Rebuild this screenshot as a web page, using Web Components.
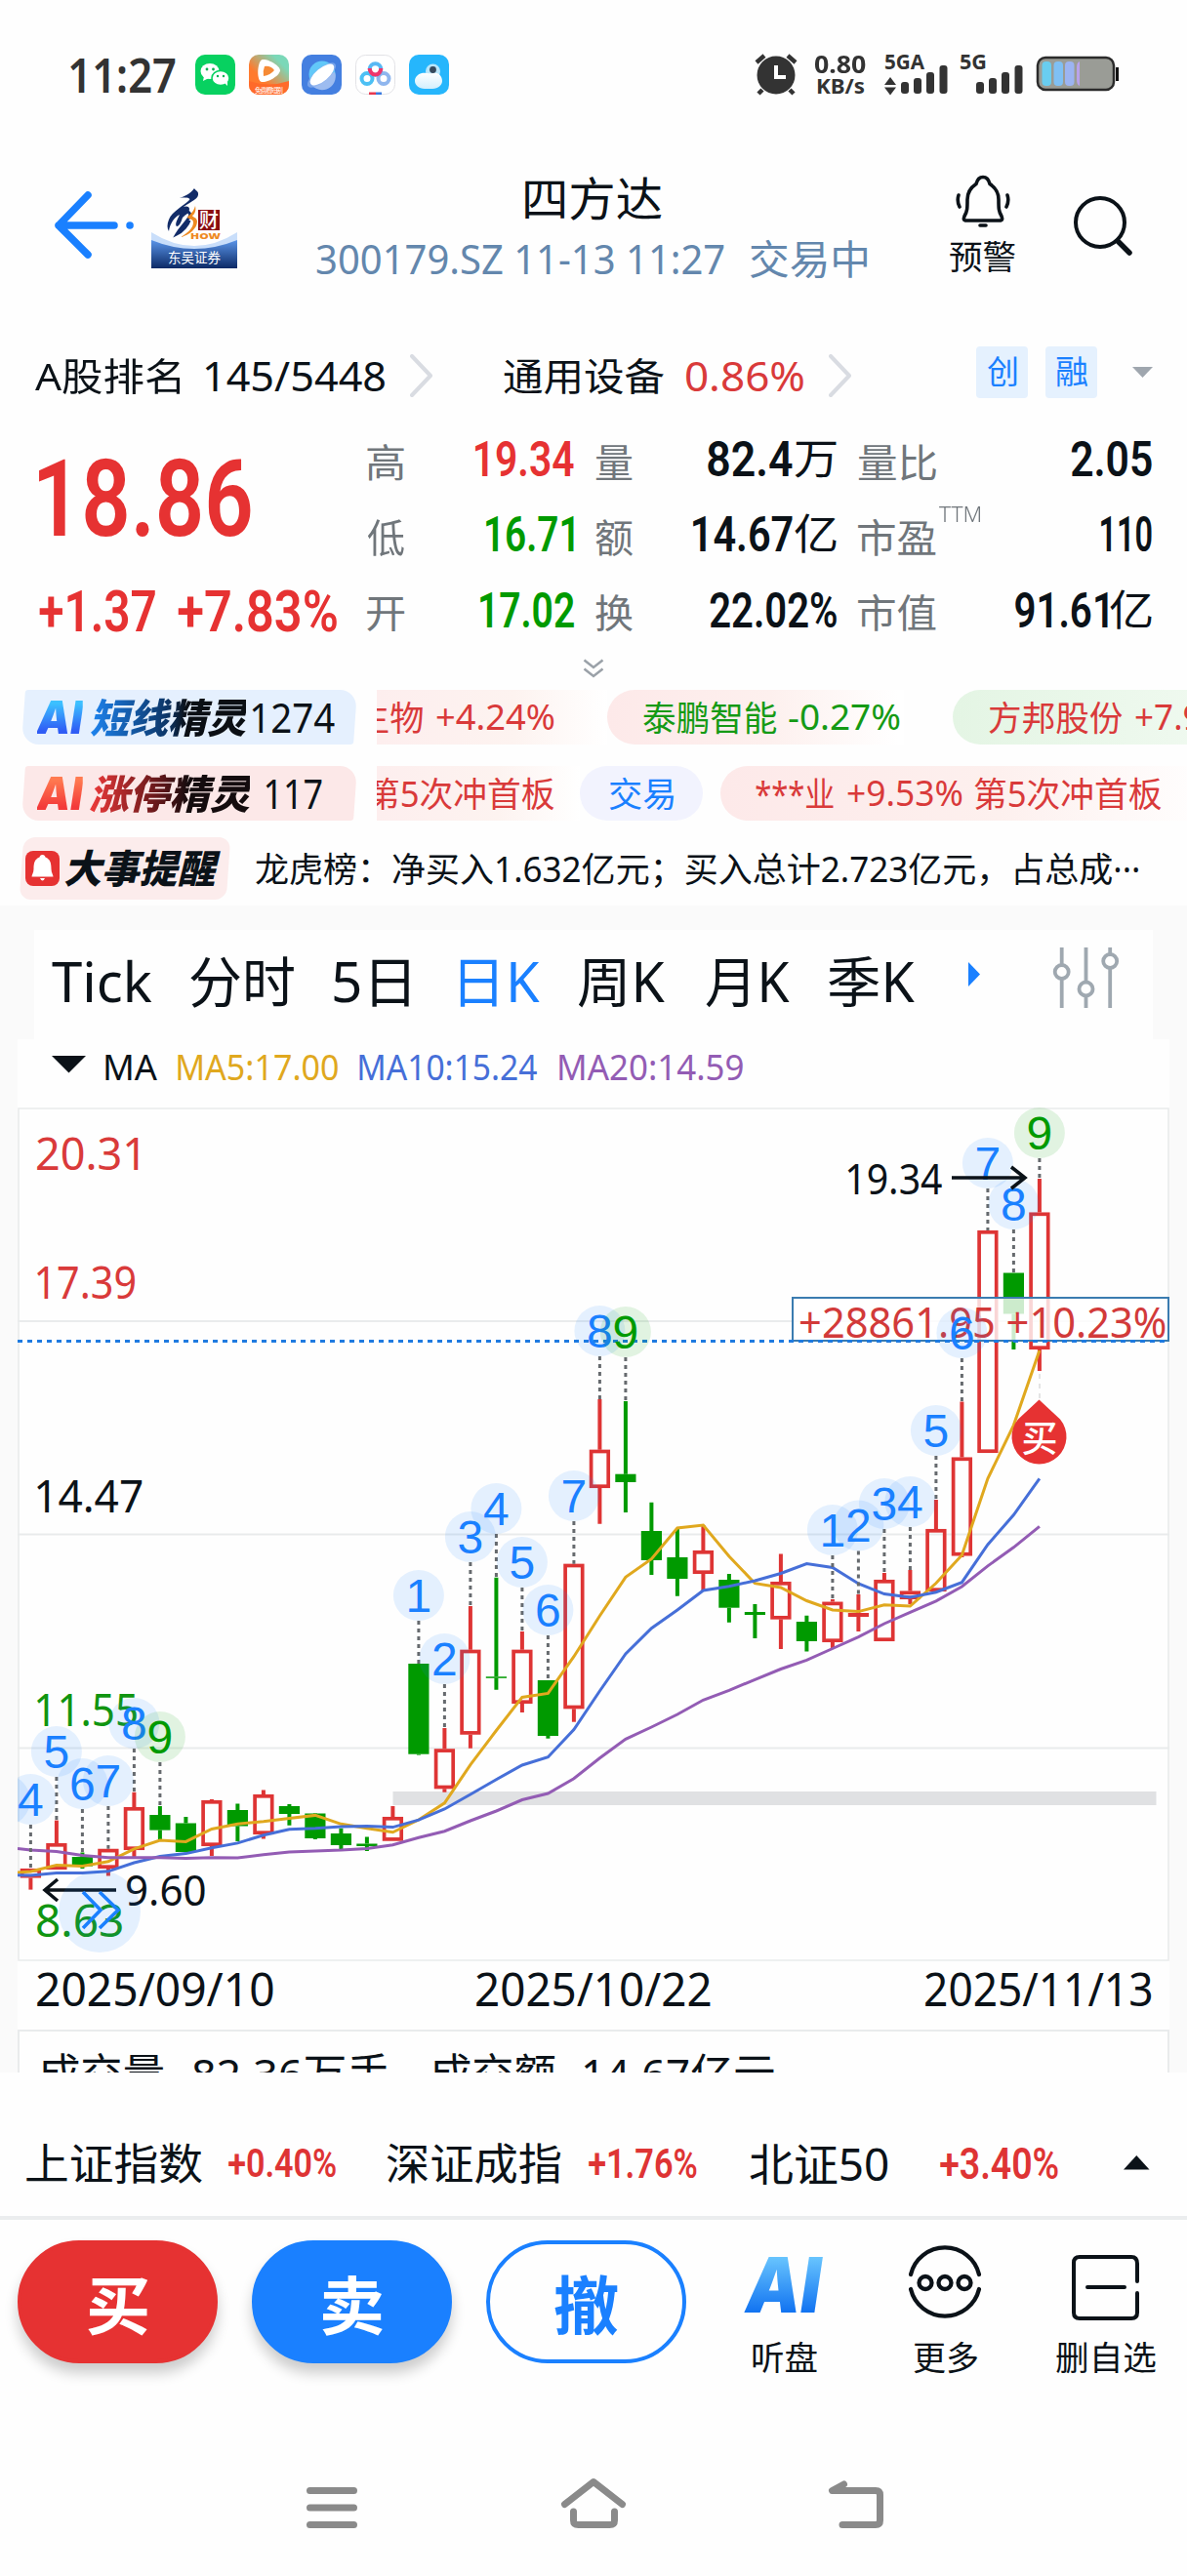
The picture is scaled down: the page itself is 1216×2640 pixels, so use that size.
<!DOCTYPE html>
<html lang="zh-CN">
<head>
<meta charset="utf-8">
<title>四方达 300179.SZ</title>
<style>
  html, body { margin: 0; padding: 0; background: #fefefe; }
  body {
    width: 1216px;
    height: 2640px;
    overflow: hidden;
    font-family: "Noto Sans", "Noto Sans CJK SC", sans-serif;
    color: #0b1218;
  }
</style>
</head>
<body>
<stock-page></stock-page>

<script>
const SANS = '"Noto Sans", "Noto Sans CJK SC", sans-serif';
const RED = '#e63232';
const GREEN = '#009a00';
const BLUE = '#1a80ff';

const ctx = document.createElement('canvas').getContext('2d');

function inkBox(text, font) {
  ctx.font = font;
  const m = ctx.measureText(text);
  return { left: -m.actualBoundingBoxLeft, width: m.actualBoundingBoxLeft + m.actualBoundingBoxRight };
}

class BaseElement extends HTMLElement {
  constructor() {
    super();
    this.attachShadow({ mode: 'open' });
  }

  connectedCallback() {
    this.shadowRoot.innerHTML = `<style>:host { display: block; box-sizing: border-box; } ${this.styles}</style>${this.render()}`;
  }

  get styles() { return ''; }
  render() { return '<slot></slot>'; }
}

// Single line of text squeezed or stretched so that its ink is exactly `w` wide
class FitText extends HTMLElement {
  constructor() {
    super();
    this.attachShadow({ mode: 'open' });
  }

  connectedCallback() {
    const w = Number(this.getAttribute('w'));
    const size = Number(this.getAttribute('size'));
    this.shadowRoot.innerHTML = `
      <style>
        :host { display: block; flex: none; width: ${w}px; font-size: ${size}px; white-space: nowrap; }
        span {
          display: block;
          width: max-content;
          transform-origin: 0 50%;
          background: var(--fill, none);
          -webkit-background-clip: text;
          background-clip: text;
          color: var(--fill-color, inherit);
        }
      </style>
      <span><slot></slot></span>
    `;
    const cs = getComputedStyle(this);
    const ink = inkBox(this.textContent, `${cs.fontStyle} ${cs.fontWeight} ${size}px ${cs.fontFamily}`);
    const k = w / ink.width;
    this.shadowRoot.querySelector('span').style.transform = `translateX(${-ink.left * k}px) scaleX(${k})`;
  }
}

class StatusBar extends BaseElement {
  get styles() {
    return `
      :host { height: 152px; padding-top: 56px; color: #333; }
      .row { display: flex; align-items: flex-start; height: 42px; }
      .time { margin-left: 72px; line-height: 40px; font-weight: 600; }
      .apps { display: flex; gap: 13.7px; margin-left: 20px; }
      .apps svg { width: 41px; height: 41px; }
      .alarm { margin: -2px 0 0 313px; }
      .speed { margin: -2px 0 0 17px; font-weight: 700; line-height: 22px; }
      .sig { margin-top: -2px; }
      svg { display: block; flex: none; }
    `;
  }

  signal(x, label, arrows) {
    const bars = [[0, 84], [13, 80], [26, 74], [39.5, 67]]
      .map(([dx, y]) => `<rect x="${x + dx}" y="${y - 54}" width="8" height="${96 - y}" rx="3"/>`).join('');
    return `${bars}${arrows ? '<path d="M1 33l6-8 6 8zM1 35.500h12l-6 8z"/>' : ''}${label}`;
  }

  render() {
    return `
      <div class="row">
        <fit-text class="time" w="108" size="49">11:27</fit-text>
        <div class="apps">
          <svg viewBox="0 0 41 41"><rect width="41" height="41" rx="10" fill="#07d160"/>
            <ellipse cx="15" cy="17" rx="9.500" ry="8" fill="#fff"/><path d="M9 22l-1 5 6-3z" fill="#fff"/>
            <ellipse cx="26" cy="24" rx="9" ry="7.500" fill="#fff" stroke="#07d160" stroke-width="1.500"/><path d="M30 29l3 3v-5z" fill="#fff"/>
            <g fill="#07b050"><circle cx="12" cy="15" r="1.400"/><circle cx="18.500" cy="15" r="1.400"/><circle cx="23" cy="22" r="1.200"/><circle cx="29" cy="22" r="1.200"/></g>
          </svg>
          <svg viewBox="0 0 41 41"><defs><linearGradient id="v" x1="0" y1="1" x2="1" y2="0"><stop offset=".35" stop-color="#ff7a2e"/><stop offset=".8" stop-color="#7bd8b8"/></linearGradient></defs>
            <rect width="41" height="41" rx="10" fill="url(#v)"/><path d="M0 27q20 7 41 0v4a10 10 0 0 1-10 10H10a10 10 0 0 1-10-10z" fill="#ff6a2a"/>
            <path d="M14 5c-5 0-7 21-1 23 7 1 19-7 19-12S19 4 14 5z" fill="#fff"/><path d="M16 12q-2 5-1 10 7-1 11-6-4-5-10-4z" fill="#f68a35"/>
            <text x="6" y="38.500" font-size="7" fill="#fff" textLength="29">免费看短剧</text>
          </svg>
          <svg viewBox="0 0 41 41"><rect width="41" height="41" rx="10" fill="#447fe0"/>
            <circle cx="21" cy="20" r="13.500" fill="#62c8f8"/><path d="M8 27a13.500 13.500 0 0 0 26-9z" fill="#9dbcf0"/>
            <ellipse cx="20.500" cy="21" rx="18" ry="7" transform="rotate(-40 20.500 21)" fill="#8db2ee" opacity=".7"/>
            <ellipse cx="21" cy="20.500" rx="15" ry="6.500" transform="rotate(-40 21 20.500)" fill="#fff"/>
          </svg>
          <svg viewBox="0 0 41 41"><rect x=".5" y=".5" width="40" height="40" rx="10" fill="#fff" stroke="#e2e2e6"/>
            <g fill="none" stroke-width="4"><circle cx="12" cy="24.500" r="5.500" stroke="#4cc0f4"/><circle cx="29" cy="24.500" r="5.500" stroke="#8fb6ee"/><circle cx="20.500" cy="15" r="5.800" stroke="#58b8f4"/><path d="M14.700 14a5.800 6.500 0 0 0 11.600 0" stroke="#f0356c"/></g>
            <path d="M14 38.500h7V41h-7z" fill="#e8384f"/><path d="M21 38.500h6V41h-6z" fill="#3a7be0"/>
          </svg>
          <svg viewBox="0 0 41 41"><defs><linearGradient id="c" x1="0" y1="0" x2="0" y2="1"><stop offset="0" stop-color="#fff"/><stop offset="1" stop-color="#d2effd"/></linearGradient></defs>
            <rect width="41" height="41" rx="10" fill="#26b6fc"/><circle cx="24.500" cy="17" r="7.500" fill="#b9e6fb"/>
            <path d="M13 19c4-1 7 1 12 0 6-1 9 4 9 8s-4 8-10 8h-8c-6 0-10-4-10-8s3-7 7-8z" fill="url(#c)"/><circle cx="24.500" cy="15.500" r="3.400" fill="#36495c"/>
          </svg>
        </div>
        <svg class="alarm" width="44" height="44" viewBox="0 0 44 44">
          <circle cx="22" cy="23" r="19.500" fill="#333"/><path d="M22 13v12h10" fill="none" stroke="#fff" stroke-width="4"/>
          <path d="M2 10l8-7M42 10l-8-7M8 38l-4 4M36 38l4 4" stroke="#333" stroke-width="4.500"/>
        </svg>
        <div class="speed">
          <fit-text w="53" size="25">0.80</fit-text>
          <fit-text w="49" size="22" style="margin-left:3px">KB/s</fit-text>
        </div>
        <svg class="sig" style="margin-left:18px" width="70" height="44" viewBox="0 0 70 44" fill="#333">
          ${this.signal(18, '<text x="1" y="17" font-size="21" font-weight="700" textLength="41" lengthAdjust="spacingAndGlyphs">5GA</text>', true)}
        </svg>
        <svg class="sig" style="margin-left:8px" width="70" height="44" viewBox="0 0 70 44" fill="#333">
          ${this.signal(17, '<text x="0" y="17" font-size="21" font-weight="700" textLength="28" lengthAdjust="spacingAndGlyphs">5G</text>', false)}
        </svg>
        <svg style="margin:1px 0 0 8px" width="86" height="37" viewBox="0 0 86 37">
          <rect x="2" y="2" width="78" height="33" rx="8" fill="#9a9c96" stroke="#2b2b2b" stroke-width="2.500"/>
          <path d="M82 12h3v14h-3z" fill="#111"/>
          <rect x="6.500" y="6" width="9.500" height="25" rx="4" fill="#69cdf0"/><rect x="18.500" y="6" width="9.500" height="25" rx="4" fill="#7fc0f4"/>
          <rect x="30" y="6" width="9.500" height="25" rx="4" fill="#9cb4f2"/><path d="M45 6v25q-3-1-3-6V12q0-5 3-6z" fill="#b9a2ec"/>
        </svg>
      </div>
    `;
  }
}

class StockHeader extends BaseElement {
  get styles() {
    return `
      :host { display: flex; align-items: flex-start; height: 193px; }
      svg { display: block; flex: none; }
      .logo { width: 88px; height: 85px; margin: 38px 0 0 18px; }
      .title { display: flex; flex-direction: column; width: 564px; margin: 20px 0 0 81px; }
      .name { line-height: 62px; align-self: center; margin-left: 4px; }
      .code { display: flex; gap: 26px; line-height: 62px; color: #6387ad; }
      .alert { margin: 27px 0 0 85px; line-height: 40px; }
    `;
  }

  render() {
    return `
      <svg style="margin:43px 0 0 52px" width="85" height="72" viewBox="52 195 85 72" fill="none" stroke="${BLUE}" stroke-width="7.500" stroke-linecap="round" stroke-linejoin="round">
        <path d="M90 200L60 231l30 30M60 231h57M133 231h.1"/>
      </svg>
      <svg class="logo" viewBox="0 0 88 85">
        <defs><linearGradient id="g" x1="0" y1="0" x2="0" y2="1"><stop offset="0" stop-color="#5a94e8"/><stop offset="1" stop-color="#0c2a66"/></linearGradient></defs>
        <path d="M0 48q44 28 88 0v37H0z" fill="#c9defa"/><path d="M0 56q44 18 88 0v29H0z" fill="url(#g)"/>
        <path d="M44 3c-4 6-10 8-15 10 6-1 12 0 10 2-6 6-18 12-21 20-2 5-2 9 0 12 1-8 6-15 11-17-3 6-5 10-3 12 3 0 5-6 6-9 4-4 7-5 7-9 0-3-4-3-6-2 8-6 16-8 15-14 0-2-3-3-4-5z" fill="#122c68"/>
        <path d="M34 29c4-4 8 0 4 5-4 6-8 9-12 16 6-3 12-10 13-14" fill="none" stroke="#122c68" stroke-width="3"/>
        <path d="M45 21c-2 8-8 10-8 12 2 2 6 1 6 5 0 6-6 11-13 15 9-2 17-9 17-16 0-4-4-4-5-6 3-2 4-6 3-10z" fill="#ee8a22"/>
        <rect x="48" y="25" width="22" height="21" fill="#8a0d10"/>
        <text x="49" y="43" font-size="20" fill="#fff" font-weight="500">财</text>
        <text x="40" y="55" font-size="8" font-weight="900" fill="#ee8a22" textLength="31" lengthAdjust="spacingAndGlyphs">HOW</text>
        <text x="17" y="78.500" font-size="13.500" fill="#fff" textLength="54">东吴证券</text>
      </svg>
      <div class="title">
        <fit-text class="name" w="140" size="47">四方达</fit-text>
        <div class="code"><fit-text w="418" size="42.500">300179.SZ 11-13 11:27</fit-text><fit-text w="120" size="41">交易中</fit-text></div>
      </div>
      <div class="alert">
        <svg style="margin-left:6px" width="56" height="55" viewBox="979 179 56 55" fill="none" stroke="#0b1218" stroke-width="3.600" stroke-linecap="round">
          <path d="M1007 181.500c-4 0-6 3-7 7-6 4-9 9-9 16 0 9 0 12-3 17-1 3-1 4 1 4.500h36c2-.5 2-1.500 1-4.500-3-5-3-8-3-17 0-7-3-12-9-16-1-4-3-7-7-7zM1004 231h6M982 200q-2 6 1 12M1032 200q2 6-1 12"/>
        </svg>
        <fit-text style="margin-top:9px" w="67" size="34">预警</fit-text>
      </div>
      <svg style="margin:48px 0 0 59px" width="64" height="64" viewBox="1099 200 64 64" fill="none" stroke="#0b1218" stroke-width="4" stroke-linecap="round">
        <circle cx="1127" cy="228" r="25"/><path d="M1145 247l12 12" stroke-width="5.500"/>
      </svg>
    `;
  }
}

class RankRow extends BaseElement {
  get styles() {
    return `
      :host { display: flex; align-items: center; height: 80px; line-height: 80px; padding-left: 36px; }
      svg { flex: none; }
      .tag { width: 53px; height: 53px; border-radius: 4px; background: #e5f1fe; color: ${BLUE}; line-height: 51px; display: flex; justify-content: center; margin-bottom: 7px; }
    `;
  }

  get chevron() {
    return '<svg width="24" height="44" viewBox="0 0 24 44" fill="none" stroke="#d9dce2" stroke-width="4" stroke-linecap="round" stroke-linejoin="round"><path d="M2 2l19 20L2 42"/></svg>';
  }

  render() {
    return `
      <fit-text w="149" size="39">A股排名</fit-text>
      <fit-text w="184" size="42" style="margin:0 26px 0 25px">145/5448</fit-text>${this.chevron}
      <fit-text w="164" size="39" style="margin-left:72px">通用设备</fit-text>
      <fit-text w="120" size="42" style="margin:0 26px 0 23px;color:#d93a3a">0.86%</fit-text>${this.chevron}
      <div class="tag" style="margin-left:127px"><fit-text w="31" size="33">创</fit-text></div>
      <div class="tag" style="margin-left:18px"><fit-text w="32" size="33">融</fit-text></div>
      <svg style="margin:0 0 7px 36px" width="22" height="12"><path d="M0 0h21L10.500 11z" fill="#9fa6ae"/></svg>
    `;
  }
}

class QuotePanel extends BaseElement {
  get styles() {
    return `
      :host { height: 282px; }
      .grid { display: grid; grid-template-columns: 336px 212px 22px 247px 22px 301px; grid-template-rows: repeat(3, 77.3px); padding: 8px 0 0 40px; line-height: 77px; }
      .price { grid-row: 1 / 3; display: flex; align-items: center; line-height: 120px; padding-top: 3px; font-family: Roboto; font-weight: 600; color: ${RED}; }
      .change { display: flex; gap: 23px; color: ${RED}; font-family: Roboto; font-weight: 600; }
      .cell { display: flex; justify-content: space-between; align-items: center; }
      .label { display: flex; color: #70767b; padding-top: 3px; }
      .ttm { line-height: 24px; margin: 2px 0 0 3px; color: #70767b; font-weight: 300; }
      .value { display: flex; gap: 2px; font-weight: 600; font-family: Roboto, "Noto Sans CJK SC"; }
      .value .unit { font-weight: 400; }
      .more { display: block; margin: 10px auto 0; }
    `;
  }

  cell(label, lw, col, row, num, nw, color = '', unit = '', ttm = '') {
    return `
      <div class="cell" style="grid-area:${row}/${col}">
        <div class="label"><fit-text w="${lw}" size="40">${label}</fit-text>${ttm && `<fit-text class="ttm" w="42" size="22">${ttm}</fit-text>`}</div>
        <div class="value" style="color:${color || 'inherit'}"><fit-text w="${nw}" size="50">${num}</fit-text>${unit && `<fit-text class="unit" w="43" size="43">${unit}</fit-text>`}</div>
      </div>`;
  }

  render() {
    return `
      <div class="grid">
        <div class="price"><fit-text w="217" size="109">18.86</fit-text></div>
        <div class="change" style="grid-area:3/1"><fit-text w="119" size="60">+1.37</fit-text><fit-text w="163" size="60">+7.83%</fit-text></div>
        ${this.cell('高', 38, 2, 1, '19.34', 101, '#e63232')}
        ${this.cell('低', 38, 2, 2, '16.71', 90, GREEN)}
        ${this.cell('开', 38, 2, 3, '17.02', 96, GREEN)}
        ${this.cell('量', 38, 4, 1, '82.4', 87, '', '万')}
        ${this.cell('额', 38, 4, 2, '14.67', 102, '', '亿')}
        ${this.cell('换', 38, 4, 3, '22.02%', 130)}
        ${this.cell('量比', 80, 6, 1, '2.05', 83)}
        ${this.cell('市盈', 80, 6, 2, '110', 52, '', '', 'TTM')}
        ${this.cell('市值', 80, 6, 3, '91.61', 95, '', '亿')}
      </div>
      <svg class="more" width="22" height="20" viewBox="0 0 22 20" fill="none" stroke="#9aa1a8" stroke-width="2.500"><path d="M1.500 1.500L11 9l9.500-7.500M1.500 10.500L11 18l9.500-7.500"/></svg>
    `;
  }
}

class AlertFeed extends BaseElement {
  get styles() {
    return `
      :host { height: 221px; }
      .line { display: flex; height: 56px; margin-bottom: 22px; padding-left: 22px; line-height: 56px; }
      .chip { position: relative; z-index: 0; display: flex; flex: none; box-sizing: border-box; width: 344px; padding-left: 14px; }
      .chip::before { content: ""; position: absolute; z-index: -1; inset: 0 2px; border-radius: 3px 18px 3px 18px; transform: skewX(-4deg); background: #e5f0fe; }
      .chip.red::before { background: #fce8e8; }
      .art { font-style: italic; font-weight: 900; }
      .ai { font-family: Inter, Roboto; }
      .blue .ai { --fill: linear-gradient(#3cc0ff 25%, #2f5cf5 75%); --fill-color: transparent; }
      .blue .word { --fill: linear-gradient(90deg, #1d84f0, #0c3566 50%, #0b0f14 62%); --fill-color: transparent; }
      .red .ai { --fill: linear-gradient(#ff7a50 25%, #f33a3a 75%); --fill-color: transparent; }
      .red .word { --fill: linear-gradient(90deg, #f03a3a, #5a1518 46%, #140c0e 62%); --fill-color: transparent; }
      .strip { display: flex; flex: 1; margin-left: 20px; overflow: hidden; color: #d93a3a; }
      .pill { display: flex; flex: none; box-sizing: border-box; height: 56px; border-radius: 28px 0 0 28px; background: linear-gradient(90deg, #fde9e9, #fdf0ee 55%, #fff 98%); }
      .pill.cut { border-radius: 0; background: linear-gradient(90deg, #fdeeee, #fdf3f0 60%, #fff); }
      .event { display: flex; padding-left: 20px; height: 64px; line-height: 64px; margin-top: -5px; }
      .event .chip { width: 216px; padding-left: 6px; align-items: center; }
      .event .chip::before { border-radius: 12px; background: #fcecec; }
    `;
  }

  render() {
    return `
      <div class="line">
        <div class="chip blue">
          <fit-text class="art ai" w="50" size="47">AI</fit-text>
          <fit-text class="art word" style="margin-left:6px" w="164" size="41">短线精灵</fit-text>
          <fit-text style="margin-left:2px" w="85" size="42.500">1274</fit-text>
        </div>
        <div class="strip">
          <div class="pill cut" style="width:236px"><fit-text style="margin-left:-21px" w="68" size="35.500">生物</fit-text><fit-text style="margin-left:14px" w="121" size="36">+4.24%</fit-text></div>
          <div class="pill" style="width:304px;margin-right:50px;padding-left:37px;color:#159a15"><fit-text w="137" size="35.500">泰鹏智能</fit-text><fit-text style="margin-left:12px" w="114" size="36">-0.27%</fit-text></div>
          <div class="pill" style="width:360px;padding-left:37px;background:linear-gradient(90deg,#e4f5e4,#f4fbf4)"><fit-text w="137" size="35.500">方邦股份</fit-text><fit-text style="margin-left:13px" w="117" size="36">+7.96%</fit-text></div>
        </div>
      </div>
      <div class="line">
        <div class="chip red">
          <fit-text class="art ai" w="50" size="47">AI</fit-text>
          <fit-text class="art word" style="margin-left:6px" w="168" size="41">涨停精灵</fit-text>
          <fit-text style="margin-left:12px" w="58" size="42.500">117</fit-text>
        </div>
        <div class="strip">
          <div class="pill cut" style="width:208px"><fit-text style="margin-left:-10px" w="192" size="35.500">第5次冲首板</fit-text></div>
          <div class="pill" style="width:126px;margin-right:18px;padding-left:30px;border-radius:28px;background:#f2f3fe;color:#1a80ff"><fit-text w="66" size="35.500">交易</fit-text></div>
          <div class="pill" style="width:520px;padding-left:36px">
            <fit-text w="80" size="35.500">***业</fit-text><fit-text style="margin-left:14px" w="118" size="36">+9.53%</fit-text><fit-text style="margin-left:12px" w="192" size="35.500">第5次冲首板</fit-text>
          </div>
        </div>
      </div>
      <div class="event">
        <div class="chip">
          <svg width="35" height="36" viewBox="0 0 35 36"><rect width="35" height="36" rx="8" fill="#e63232"/><path d="M17.500 4c2 0 2.500 1 3 2.500 5 2 6 6 6 12 0 4 2 6 2 8h-22c0-2 2-4 2-8 0-6 1-10 6-12C15 5 15.500 4 17.500 4zM15 28h5q-2.500 5-5 0z" fill="#fff"/></svg>
          <fit-text class="art" style="margin-left:5px" w="160" size="40">大事提醒</fit-text>
        </div>
        <fit-text style="margin-left:26px" w="904" size="35.500">龙虎榜：净买入1.632亿元；买入总计2.723亿元，占总成···</fit-text>
      </div>
    `;
  }
}

class PeriodTabs extends BaseElement {
  get styles() {
    return `
      :host { display: flex; align-items: center; height: 112px; margin: 0 35px; padding: 0 0 8px 18px; background: #fefefe; line-height: 104px; }
      svg { flex: none; }
      .on { color: ${BLUE}; }
    `;
  }

  render() {
    const tabs = [['Tick', 103, 0], ['分时', 106, 39], ['5日', 77, 41], ['日K', 82, 52], ['周K', 89, 39], ['月K', 86, 42], ['季K', 88, 40]];
    return `
      ${tabs.map(([t, w, gap]) => `<fit-text class="${t === '日K' ? 'on' : ''}" w="${w}" size="56" style="margin-left:${gap}px">${t}</fit-text>`).join('')}
      <svg style="margin:-12px 0 0 55px" width="13" height="26"><path d="M0 0v25l12-12.500z" fill="${BLUE}"/></svg>
      <svg style="margin:-6px 0 0 73px" width="69" height="64" viewBox="1077 970 69 64" fill="#fefefe" stroke="#9fa8b0" stroke-width="3.800">
        <path d="M1086.700 971v62M1111.500 971v62M1136.200 971v62"/><circle cx="1086.700" cy="996" r="7"/><circle cx="1111.500" cy="1013.500" r="7"/><circle cx="1136.200" cy="985" r="7"/>
      </svg>
    `;
  }
}

class MaLegend extends BaseElement {
  get styles() {
    return ':host { display: flex; align-items: center; height: 70px; line-height: 58px; padding: 0 0 12px 35px; box-sizing: border-box; background: #fefefe; }';
  }

  render() {
    return `
      <svg style="margin-top:-6px" width="36" height="18"><path d="M0 0h35L17.500 17.500z" fill="#0b1218"/></svg>
      <fit-text style="margin-left:19px" w="53" size="36">MA</fit-text>
      <fit-text style="margin-left:21px;color:#e0a81e" w="164" size="36">MA5:17.00</fit-text>
      <fit-text style="margin-left:22px;color:#466fd8" w="182" size="36">MA10:15.24</fit-text>
      <fit-text style="margin-left:23px;color:#935cb4" w="188" size="36">MA20:14.59</fit-text>
    `;
  }
}

// [up, open/close top, bottom, high, low, badge line top, badge]
const CANDLES = [
  [1, 1915, 1924.5, 1915, 1936.6, 1870, 4], [1, 1889, 1916, 1865.6, 1916, 1821, 5], [0, 1903, 1912.6, 1898.5, 1915, 1854, 6],
  [1, 1894.8, 1915, 1894.8, 1922.5, 1851, 7], [1, 1852, 1896, 1836.7, 1905, 1792, 8], [0, 1860, 1875.6, 1851, 1885.5, 1806, 9],
  [0, 1868.5, 1898, 1862, 1898], [1, 1845, 1892, 1844, 1902], [0, 1855, 1871.5, 1848.6, 1887], [1, 1839, 1880, 1834.5, 1884.5],
  [0, 1851, 1859, 1849, 1870.8], [0, 1858.5, 1884, 1858, 1885], [0, 1879, 1891, 1873.7, 1895], [0, 1889.5, 1892, 1882.6, 1897],
  [1, 1862, 1886.7, 1851, 1886.7],
  [0, 1705, 1797.7, 1705, 1798.6, 1661, 1], [1, 1792.3, 1833.3, 1771, 1836.7, 1726, 2], [1, 1690.7, 1777.7, 1646, 1791.7, 1601, 3],
  [0, 1718.3, 1719.8, 1616.7, 1731.7, 1572, 4], [1, 1690.7, 1746, 1672, 1755, 1627, 5], [0, 1722, 1779, 1722, 1781.7, 1676, 6],
  [1, 1602.7, 1751.3, 1602.7, 1764.7, 1559, 7], [1, 1485.7, 1525, 1434, 1561.7, 1390, 8], [0, 1510.7, 1519, 1436, 1550, 1391, 9],
  [0, 1569, 1599, 1539.7, 1614], [0, 1596, 1618, 1566.7, 1635.7], [1, 1589, 1613, 1563, 1630], [0, 1619, 1647.7, 1613, 1662.7],
  [0, 1652, 1655, 1644, 1679], [1, 1621, 1659.6, 1592.6, 1690], [0, 1662, 1682, 1655.8, 1692.5],
  [1, 1641.6, 1683, 1639, 1689.5, 1594, 1], [1, 1653, 1657, 1634, 1672, 1589.6, 2], [1, 1619, 1682, 1612, 1682, 1567, 3],
  [1, 1630.5, 1639, 1609, 1644, 1565, 4], [1, 1567, 1631, 1537, 1631, 1492, 5], [1, 1493.5, 1594.5, 1436.5, 1596, 1392, 6],
  [1, 1261, 1489, 1261, 1489, 1218, 7], [0, 1304.5, 1346.5, 1304.5, 1383, 1260, 8], [1, 1242.5, 1383, 1208, 1405, 1187, 9],
];
const MA5 = [1918, 1911.5, 1912.6, 1907.8, 1894.8, 1886, 1887.4, 1874.5, 1869.3, 1866.7, 1863.4, 1860.4, 1869.3, 1873.7, 1877.8, 1865, 1847.8, 1808.6, 1773.5, 1739.4, 1735.4, 1697.7, 1656, 1616.3, 1597.7, 1566, 1563, 1595, 1622.7, 1627, 1640.5, 1650, 1651.6, 1644.7, 1646, 1622.5, 1593.8, 1515.3, 1460.6, 1384];
const MA10 = [1922, 1919.6, 1919.6, 1917.8, 1909, 1902.6, 1899.6, 1893.7, 1888.9, 1880.8, 1874.8, 1873.7, 1871.9, 1871.5, 1872.6, 1865.2, 1854, 1839, 1823.8, 1809, 1800.8, 1772.5, 1733, 1695, 1668.7, 1650, 1630, 1625.7, 1620, 1612.5, 1602.6, 1606.4, 1623, 1633.6, 1637, 1631.7, 1621.7, 1583, 1552.5, 1515.3];
const MA20 = [1896, 1897.4, 1901.5, 1903.7, 1903.7, 1903.7, 1904.4, 1903.7, 1904, 1900.7, 1898, 1897, 1896, 1894.4, 1890.7, 1883.3, 1876.7, 1866, 1856, 1844.5, 1838, 1822.7, 1801.7, 1782.3, 1770, 1757, 1742.3, 1732.3, 1721.3, 1710.5, 1701.3, 1689.5, 1677.6, 1664, 1652.3, 1640.9, 1626, 1604.9, 1585.8, 1564.3];

class KChart extends BaseElement {
  get styles() {
    return `
      :host { height: 945px; background: #fefefe; }
      svg { display: block; }
      .dates { display: flex; height: 70px; line-height: 56px; padding-left: 20px; box-sizing: border-box; }
    `;
  }

  x(i) { return 31.4 + 26.5 * i; }

  // x is the left edge of the ink, y the baseline
  text(str, x, y, w, size, fill, family = SANS, weight = 400) {
    const ink = inkBox(str, `${weight} ${size}px ${family}`);
    const k = w / ink.width;
    return `<text transform="translate(${x - ink.left * k} ${y}) scale(${k} 1)" font-size="${size}" font-weight="${weight}" style='font-family:${family}' fill="${fill}">${str}</text>`;
  }

  candle([up, top, bottom, high, low], i) {
    const x = this.x(i);
    const color = up ? '#de3434' : GREEN;
    const wick = `<path d="M${x} ${high}V${top}M${x} ${bottom}V${low}" stroke="${color}" stroke-width="4"/>`;
    if (up && bottom - top > 6) {
      return `${wick}<rect x="${x - 8.8}" y="${top + 1.8}" width="17.600" height="${bottom - top - 3.6}" fill="none" stroke="${color}" stroke-width="3.700"/>`;
    }
    return `${wick}<rect x="${x - 10.6}" y="${top}" width="21.200" height="${bottom - top}" fill="${color}"/>`;
  }

  stem([, , , high, , stem], i) {
    return stem ? `<path d="M${this.x(i)} ${stem}V${high}" stroke="#666a6e" stroke-width="3" stroke-dasharray="4 4"/>` : '';
  }

  badge([, , , , , stem, n], i) {
    if (!stem) return '';
    const color = n === 9 ? GREEN : BLUE;
    return `
      <circle cx="${this.x(i)}" cy="${stem - 26}" r="26" fill="${color}" fill-opacity=".115"/>
      <text x="${this.x(i)}" y="${stem - 9.5}" font-size="48" text-anchor="middle" fill="${color}" style='font-family:"Liberation Sans"'>${n}</text>`;
  }

  line(ys, start, color) {
    return `<polyline points="18,${start} ${ys.map((y, i) => `${this.x(i)},${y}`).join(' ')}" fill="none" stroke="${color}" stroke-width="3"/>`;
  }

  render() {
    return `
      <svg width="1180" height="875" viewBox="18 1135 1180 875">
        <path d="M19 1136H1197V2009H19z" fill="none" stroke="#e9ebec" stroke-width="1.600"/>
        <path d="M18 1354H1198M18 1572.500H1198M18 1791.500H1198" stroke="#e9ebec" stroke-width="2"/>
        ${this.text('20.31', 38, 1199, 104, 46, '#d93a3a')}
        ${this.text('17.39', 38, 1331, 100, 46, '#d93a3a')}
        ${this.text('14.47', 38, 1550, 108, 46, '#0b1218')}
        ${this.text('11.55', 38, 1769, 102, 46, '#109510')}
        ${this.text('8.63', 38, 1985, 87, 46, '#109510')}
        <path d="M402.500 1843H1184.500" stroke="#e0e1e3" stroke-width="14"/>
        ${CANDLES.map((c, i) => this.candle(c, i)).join('')}
        <path d="M1065 1408V1434" stroke="#e4e4e4" stroke-width="2" stroke-dasharray="5 5"/>
        ${this.line(MA5, 1919, '#e0a81e')}
        ${this.line(MA10, 1921.8, '#466fd8')}
        ${this.line(MA20, 1894.4, '#935cb4')}
        <rect x="812" y="1330" width="385" height="44" fill="#fff" fill-opacity=".8" stroke="#3b7cb0" stroke-width="2"/>
        ${this.text('+28861.95 +10.23%', 820, 1371, 374, 44, '#d23a3a')}
        <path d="M18 1374.500H1198" stroke="#1f7be0" stroke-width="3" stroke-dasharray="5 5"/>
        ${CANDLES.map((c, i) => this.stem(c, i)).join('')}
        <circle cx="4.900" cy="1845" r="26" fill="${BLUE}" fill-opacity=".115"/>
        ${CANDLES.map((c, i) => this.badge(c, i)).join('')}
        <g fill="none" stroke="#0b1218" stroke-width="3.500">
          <path d="M975 1207H1049M1036 1196l14 11-14 11"/><path d="M119 1937H46M59 1926l-13 11 13 11"/>
        </g>
        ${this.text('19.34', 868, 1223.5, 97, 43, '#0b1218')}
        ${this.text('9.60', 130, 1952.5, 80, 43, '#0b1218')}
        <circle cx="102" cy="1959" r="42" fill="${BLUE}" fill-opacity=".115"/>
        <path d="M85 1939l18 18.500L85 1976M102 1939l19 18.500-19 18.500" fill="none" stroke="${BLUE}" stroke-width="3.600"/>
        <path d="M1064.500 1434.500L1086 1454.500A28 28 0 1 1 1043 1454.500z" fill="${RED}"/>
        ${this.text('买', 1047.5, 1488, 34, 37, '#fff', '"Noto Sans CJK SC"', 500)}
      </svg>
      <div class="dates">
        <fit-text w="242" size="46.500">2025/09/10</fit-text>
        <fit-text style="margin-left:208px" w="240" size="46.500">2025/10/22</fit-text>
        <fit-text style="margin-left:220px" w="231" size="46.500">2025/11/13</fit-text>
      </div>
    `;
  }
}

class VolumeLine extends BaseElement {
  get styles() {
    return ':host { display: flex; height: 44px; overflow: hidden; border: 2px solid #e9ebec; border-bottom: 0; box-sizing: border-box; line-height: 42px; padding: 22px 0 0 20px; background: #fefefe; }';
  }

  render() {
    return `
      <fit-text w="128" size="44">成交量</fit-text><fit-text style="margin-left:30px" w="200" size="44">82.36万手</fit-text>
      <fit-text style="margin-left:43px" w="128" size="44">成交额</fit-text><fit-text style="margin-left:29px" w="196" size="44">14.67亿元</fit-text>
    `;
  }
}

class IndexBar extends BaseElement {
  get styles() {
    return `
      :host { display: flex; align-items: center; height: 151px; padding: 38px 0 0 27px; line-height: 70px; border-bottom: 4px solid #ebedee; }
      .pct { font-family: Roboto; font-weight: 600; color: #de3434; padding-top: 2px; }
    `;
  }

  render() {
    return `
      <fit-text w="180" size="44">上证指数</fit-text><fit-text class="pct" style="margin:0 52px 0 27px" w="110" size="40">+0.40%</fit-text>
      <fit-text w="179" size="44">深证成指</fit-text><fit-text class="pct" style="margin:0 54px 0 28px" w="111" size="42">+1.76%</fit-text>
      <fit-text w="142" size="46">北证50</fit-text><fit-text class="pct" style="margin:0 67px 0 53px" w="121" size="44">+3.40%</fit-text>
      <svg width="27" height="15"><path d="M0 14.500L13.300 0 26.500 14.500z" fill="#0b1218"/></svg>
    `;
  }
}

class TradeButton extends BaseElement {
  get styles() {
    return `
      :host { display: flex; justify-content: center; width: 205px; height: 126px; border-radius: 63px; border: 4px solid transparent; line-height: 118px; font-weight: 700; color: #fff; font-family: "Noto Sans CJK SC"; box-shadow: 0 10px 14px rgba(0, 0, 0, .2); }
      :host([kind=buy]) { background: ${RED}; border-color: ${RED}; }
      :host([kind=sell]) { background: ${BLUE}; border-color: ${BLUE}; }
      :host([kind=cancel]) { color: ${BLUE}; border-color: ${BLUE}; box-shadow: none; }
    `;
  }
}

class ToolItem extends BaseElement {
  get styles() {
    return ':host { display: flex; flex-direction: column; align-items: center; line-height: 44px; } svg { display: block; margin-bottom: 14px; }';
  }

  get icon() {
    return {
      listen: `<defs><linearGradient id="a" x1="0" y1="0" x2="0" y2="1"><stop offset=".15" stop-color="#6fcbff"/><stop offset=".85" stop-color="#0a6cf0"/></linearGradient></defs>
        <text x="2" y="70" font-size="78" font-style="italic" font-weight="900" textLength="77" lengthAdjust="spacingAndGlyphs" style="font-family:Inter,Roboto" fill="url(#a)">AI</text>`,
      more: `<g fill="none" stroke="#0b1218" stroke-width="4.300" stroke-linecap="round"><path d="M6 31a36 36 0 0 1 70 0M6 46a36 36 0 0 0 70 0"/><circle cx="21" cy="39.500" r="6.500"/><circle cx="41" cy="39.500" r="6.500"/><circle cx="61" cy="39.500" r="6.500"/></g>`,
      remove: `<g fill="none" stroke="#0b1218" stroke-width="4" stroke-linecap="round"><path d="M74 38V20q0-7-6-7H15q-6 0-6 6V70q0 6 6 6H68q6 0 6-6V50M23 44H61"/></g>`,
    }[this.getAttribute('icon')];
  }

  render() {
    return `<svg width="84" height="80" viewBox="0 0 84 80">${this.icon}</svg><slot></slot>`;
  }
}

class TradeBar extends BaseElement {
  get styles() {
    return `
      :host { display: flex; align-items: flex-start; height: 215px; padding: 21px 0 0 18px; }
      trade-button { flex: none; margin-right: 35px; }
      tool-item { flex: none; margin-top: 4px; }
    `;
  }

  render() {
    return `
      <trade-button kind="buy"><fit-text w="62" size="65">买</fit-text></trade-button>
      <trade-button kind="sell"><fit-text w="62" size="65">卖</fit-text></trade-button>
      <trade-button kind="cancel"><fit-text w="65" size="65">撤</fit-text></trade-button>
      <tool-item icon="listen" style="margin-left:24px"><fit-text w="66" size="34">听盘</fit-text></tool-item>
      <tool-item icon="more" style="margin-left:81px"><fit-text w="66" size="34">更多</fit-text></tool-item>
      <tool-item icon="remove" style="margin-left:71px"><fit-text w="102" size="34">删自选</fit-text></tool-item>
    `;
  }
}

class NavBar extends BaseElement {
  get styles() {
    return ':host { display: flex; justify-content: center; gap: 202px; height: 150px; padding-top: 47px; }';
  }

  render() {
    const attrs = 'fill="none" stroke="#8a8a8a" stroke-width="7" stroke-linecap="round" stroke-linejoin="round"';
    return `
      <svg width="60" height="60" viewBox="309 2537 60 60" ${attrs}><path d="M316.500 2552.500h45M316.500 2570h45M316.500 2587.500h45"/></svg>
      <svg width="72" height="60" viewBox="572 2537 72 60" ${attrs}><path d="M578.500 2566.500L608 2543.500l29.500 23M587.500 2574v9q0 4.500 5 4.500h32q5 0 5-4.500v-9"/></svg>
      <svg width="60" height="60" viewBox="846 2537 60 60" ${attrs}><path d="M864.500 2546l-12 6.500H897q4.500 0 4.500 4.500v26q0 4.500-4.500 4.500H863"/></svg>
    `;
  }
}

class StockPage extends BaseElement {
  get styles() {
    return `
      :host { width: 1216px; height: 2640px; background: #fefefe; }
      .panel { height: 1196px; padding-top: 25px; box-sizing: border-box; background: #fafafa; }
      .chart { padding: 0 18px; }
    `;
  }

  render() {
    return `
      <status-bar></status-bar>
      <stock-header></stock-header>
      <rank-row></rank-row>
      <quote-panel></quote-panel>
      <alert-feed></alert-feed>
      <div class="panel">
        <period-tabs></period-tabs>
        <div class="chart"><ma-legend></ma-legend><k-chart></k-chart><volume-line></volume-line></div>
      </div>
      <index-bar></index-bar>
      <trade-bar></trade-bar>
      <nav-bar></nav-bar>
    `;
  }
}

customElements.define('fit-text', FitText);
customElements.define('status-bar', StatusBar);
customElements.define('stock-header', StockHeader);
customElements.define('rank-row', RankRow);
customElements.define('quote-panel', QuotePanel);
customElements.define('alert-feed', AlertFeed);
customElements.define('period-tabs', PeriodTabs);
customElements.define('ma-legend', MaLegend);
customElements.define('k-chart', KChart);
customElements.define('volume-line', VolumeLine);
customElements.define('index-bar', IndexBar);
customElements.define('trade-button', TradeButton);
customElements.define('tool-item', ToolItem);
customElements.define('trade-bar', TradeBar);
customElements.define('nav-bar', NavBar);
customElements.define('stock-page', StockPage);
</script>
</body>
</html>
